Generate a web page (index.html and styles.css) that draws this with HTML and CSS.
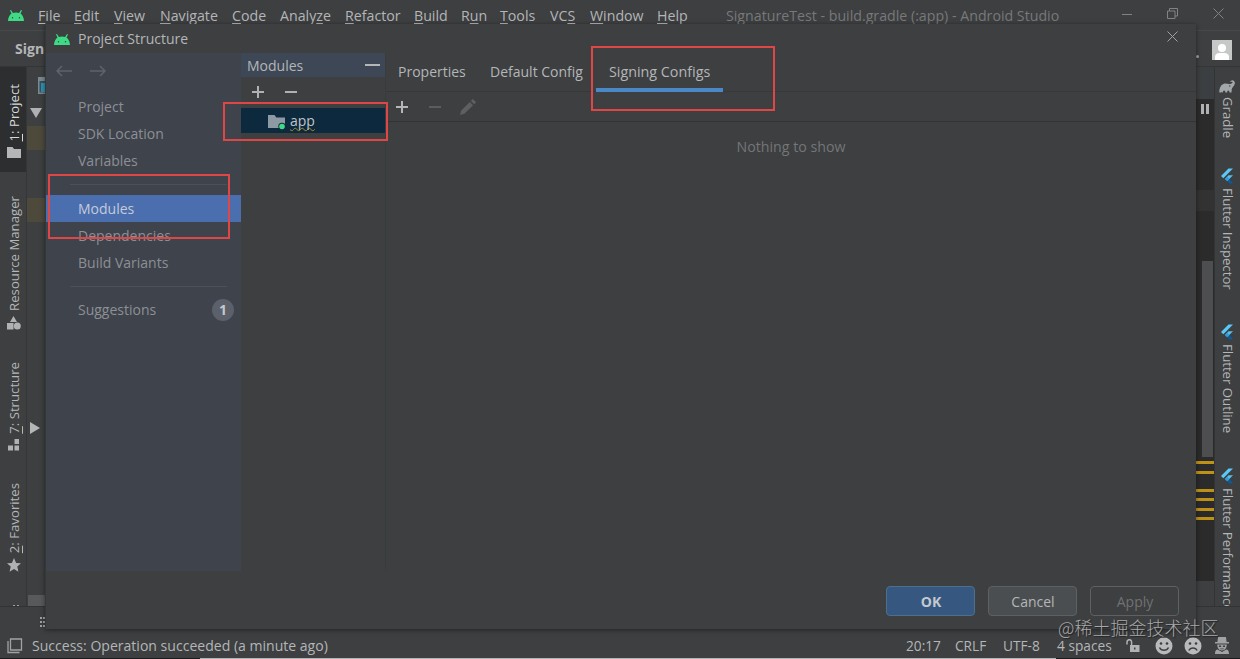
FILE: index.html
```html
<!DOCTYPE html>
<html lang="en">

<head>
  <meta charset="UTF-8" />
  <meta name="viewport" content="width=device-width, initial-scale=1.0" />
  <title>SignatureTest - Android Studio</title>
  <link rel="stylesheet" href="styles.css">
</head>

<body>

  <!-- shared icons -->
  <svg class="sprite" width="0" height="0">
    <symbol id="android" viewBox="0 0 16 11">
      <path fill="#3ddc84" d="M0 11C.2 7.500 1.500 5 3.500 3.600L2 .6 3 0l1.900 3a8.300 8.300 0 0 1 6.200 0L13 0l1 .6-1.500 3c2 1.400 3.300 3.900 3.500 7.400z" />
      <circle cx="4.500" cy="7.700" r=".7" fill="#3c3f41" />
      <circle cx="11.500" cy="7.700" r=".7" fill="#3c3f41" />
    </symbol>
    <symbol id="flutter" viewBox="0 0 12 16">
      <path fill="#5cc8f8" d="M0 8 7.500.5H12L2.300 10.200z" />
      <path fill="#54c0f0" d="M4 11 7.500 7.300H12L6.300 13z" />
      <path fill="#0d5b9d" d="m6.200 13 2.200-2.100L12 15.500H8.500z" />
      <path fill="#2d9fdc" d="M4 11l2.300-2.200 2.200 2.200L6.200 13.200z" />
    </symbol>
    <symbol id="close" viewBox="0 0 11 11">
      <path d="M.5.5l10 10M10.500.5l-10 10" stroke="currentColor" fill="none" />
    </symbol>
  </svg>

  <div class="ide">
    <header class="menubar">
      <svg class="logo" width="16" height="11"><use href="#android" /></svg>
      <nav class="menu">
        <span><u>F</u>ile</span>
        <span><u>E</u>dit</span>
        <span><u>V</u>iew</span>
        <span><u>N</u>avigate</span>
        <span><u>C</u>ode</span>
        <span>Analy<u>z</u>e</span>
        <span><u>R</u>efactor</span>
        <span><u>B</u>uild</span>
        <span>R<u>u</u>n</span>
        <span><u>T</u>ools</span>
        <span>VC<u>S</u></span>
        <span><u>W</u>indow</span>
        <span><u>H</u>elp</span>
      </nav>
      <span class="window-title">SignatureTest - build.gradle (:app) - Android Studio</span>
      <div class="window-buttons">
        <svg width="10" height="11"><path d="M0 6.500h10" stroke="#818384" /></svg>
        <svg width="11" height="11" fill="none" stroke="#818384"><path d="M.5 3h7.500v7.500H.5zM2.500 3V.5h8v7.500H8" /></svg>
        <svg width="11" height="11"><use href="#close" /></svg>
      </div>
    </header>

    <div class="toolbar">
      <b>Sign</b>
      <i class="more"></i>
      <svg class="avatar" width="20" height="20">
        <path fill="#c6c8c8" d="M0 0h20v20H0z" />
        <circle cx="10" cy="8" r="4" fill="#fff" />
        <path fill="#fff" d="M3 20v-3c0-2.500 2-4 4.500-4h5c2.500 0 4.500 1.500 4.500 4v3z" />
      </svg>
    </div>

    <main class="workspace">
      <aside class="rail rail-left">
        <div class="rail-tab project active">
          <span><u>1</u>: Project</span>
          <svg width="14" height="12"><path fill="#b4b6b7" d="M0 1h5.500L7 3h7v9H0z" /></svg>
        </div>
        <div class="rail-tab resource">
          <span>Resource Manager</span>
          <svg width="14" height="14" fill="#afb1b3"><path d="M6.500 0 10 6H3zM0 7h6.500v6.500H0z" /><circle cx="10.300" cy="10" r="3.500" /></svg>
        </div>
        <div class="rail-tab structure">
          <span><u>7</u>: Structure</span>
          <svg width="12" height="12" fill="#afb1b3"><path d="M7.500 0H12v5H7.500zM1 6.500h5v5H1zM7.500 6.500H12v5H7.500z" /></svg>
        </div>
        <div class="rail-tab favorites">
          <span><u>2</u>: Favorites</span>
          <svg width="14" height="14"><path fill="#afb1b3" d="m7 0 2.100 4.900 4.900.4-3.700 3.300 1.100 5.100L7 11l-4.400 2.700 1.100-5.100L0 5.300l4.900-.4z" /></svg>
        </div>
        <div class="rail-cut"></div>
      </aside>

      <section class="tree-edge">
        <svg class="view-icon" width="8" height="17"><path fill="#7d888e" d="M0 0h8v17H0z" /><path fill="#35505c" d="M1.500 4H8v11.500H1.500z" /><path fill="#2e91b0" d="M3 6h5v9H3z" /></svg>
        <svg class="expanded" width="12" height="10"><path fill="#afb1b3" d="M0 0h12L6 10z" /></svg>
        <div class="row-mark"></div>
        <div class="row-mark second"></div>
        <svg class="collapsed" width="10" height="12"><path fill="#b4b6b7" d="M0 0l10 6-10 6z" /></svg>
        <div class="h-scroll"></div>
      </section>

      <section class="editor-edge">
        <svg width="8" height="10"><path fill="#afb1b3" d="M0 0h3v10H0zM5 0h3v10H5z" /></svg>
        <div class="caret-row"></div>
        <div class="v-scroll"></div>
        <div class="warnings">
          <i></i><i></i><i class="spaced"></i><i></i><i></i><i></i>
        </div>
      </section>

      <aside class="rail rail-right">
        <div class="rail-tab gradle">
          <svg width="16" height="13" viewBox="0 0 16 13"><path fill="#a4a7a9" d="M.3 12.500C.2 8 2 4.500 5 3.700c2-.6 4 .5 6 .2 2.200-.3 3-1.300 2.300-1.900-.5-.5-1.300.4-1.800-.1C11 1.300 12.500 0 14 .4c2 .5 2.400 3 1.200 4.800-.9 1.400-2.200 2.200-2.500 4.300l-.2 3h-2c0-1.300-.5-2-1.200-2s-1.200.7-1.200 2H6.400c0-1.300-.6-2-1.300-2s-1.300.7-1.300 2H2.500l-.2-1-.5 1z" /><circle cx="10.800" cy="6" r=".7" fill="#3c3f41" /></svg>
          <span>Gradle</span>
        </div>
        <div class="rail-tab inspector">
          <svg width="12" height="16"><use href="#flutter" /></svg>
          <span>Flutter Inspector</span>
        </div>
        <div class="rail-tab outline">
          <svg width="12" height="16"><use href="#flutter" /></svg>
          <span>Flutter Outline</span>
        </div>
        <div class="rail-tab performance">
          <svg width="12" height="16"><use href="#flutter" /></svg>
          <span>Flutter Performance</span>
        </div>
      </aside>
    </main>

    <div class="bottom-strip">
      <svg width="5" height="11" fill="#a0a2a3"><path d="M0 0h2v2H0zM3 0h2v2H3zM0 4h2v2H0zM3 4h2v2H3zM0 8h2v2H0zM3 8h2v2H3z" /></svg>
    </div>

    <footer class="statusbar">
      <svg width="16" height="16" fill="none" stroke="#a0a2a3" stroke-width="1.300"><path d="M3.500 1h11v11h-11zM1 3v11.500h11.500" /></svg>
      <span class="message">Success: Operation succeeded (a minute ago)</span>
      <span class="cell time">20:17</span>
      <span class="cell crlf">CRLF</span>
      <span class="cell encoding">UTF-8</span>
      <span class="cell indent">4 spaces</span>
      <div class="status-icons">
        <svg width="14" height="13"><path fill="#b0b2b3" d="M4 6h9.500v7H4z" /><path fill="none" stroke="#b0b2b3" stroke-width="1.500" d="M1 5.500V3a2.200 2.200 0 0 1 4.600 0v3" /><path fill="#3c3f41" d="M8 8.500h1.500v2H8z" /></svg>
        <svg width="18" height="18"><circle cx="9" cy="9" r="8.500" fill="#b8babb" /><circle cx="6" cy="6.500" r="1.300" fill="#3c3f41" /><circle cx="12" cy="6.500" r="1.300" fill="#3c3f41" /><path fill="none" stroke="#3c3f41" stroke-width="1.400" d="M4.500 10.500c1.800 3.700 7.200 3.700 9 0" /></svg>
        <svg width="18" height="18"><circle cx="9" cy="9" r="8.500" fill="#b8babb" /><circle cx="6" cy="6.500" r="1.300" fill="#3c3f41" /><circle cx="12" cy="6.500" r="1.300" fill="#3c3f41" /><path fill="none" stroke="#3c3f41" stroke-width="1.400" d="M4.800 13.500c1.800-3.400 6.600-3.400 8.400 0" /></svg>
        <svg width="14" height="17" viewBox="0 0 16 17" preserveAspectRatio="none" fill="#a0a2a3"><path d="M3.500 0h9l.8 5H16v1.500H0V5h2.700zM2.500 7.500h11c0 3-2 6-5.500 6s-5.500-3-5.500-6zM0 17c0-3 1-4.300 3-4.500L8 15l5-2.500c2 .2 3 1.500 3 4.500z" /><path fill="#3c3f41" d="M4.500 8.500H7V10H4.500zM9 8.500h2.500V10H9zM6 11.500h4v.8H6z" /></svg>
      </div>
    </footer>
    <div class="desktop-line"></div>
  </div>

  <!-- Project Structure window -->
  <div class="dialog">
    <div class="dialog-title">
      <svg width="16" height="11"><use href="#android" /></svg>
      <span>Project Structure</span>
      <svg class="dialog-close" width="11" height="11"><use href="#close" /></svg>
    </div>

    <div class="dialog-body">
      <nav class="sidebar">
        <div class="history">
          <svg width="16" height="12"><path d="M16 6H1M6 1 1 6l5 5" /></svg>
          <svg width="16" height="12"><path d="M0 6h15M10 1l5 5-5 5" /></svg>
        </div>
        <a>Project</a>
        <a>SDK Location</a>
        <a>Variables</a>
        <hr>
        <a class="selected">Modules</a>
        <a>Dependencies</a>
        <a>Build Variants</a>
        <hr>
        <a class="suggestions">Suggestions <span class="count">1</span></a>
      </nav>

      <section class="modules">
        <div class="modules-head"><span>Modules</span><i></i></div>
        <div class="modules-tools">
          <svg width="12" height="12"><path d="M6 0v12M0 6h12" stroke="#afb1b3" stroke-width="2" /></svg>
          <svg width="12" height="12"><path d="M0 6h12" stroke="#afb1b3" stroke-width="2" /></svg>
        </div>
        <div class="module-row">
          <svg width="18" height="15"><path fill="#8d9aa3" d="M0 0h6.500l1.800 2.500H17V13H0z" /><circle cx="14" cy="11.500" r="3.700" fill="#0d293e" /><circle cx="14" cy="11.500" r="2.800" fill="#3ddc84" /></svg>
          <span>app</span>
        </div>
      </section>

      <section class="content">
        <div class="tabs">
          <span class="properties">Properties</span>
          <span class="default-config">Default Config</span>
          <span class="signing current">Signing Configs</span>
        </div>
        <div class="content-tools">
          <svg width="12" height="12"><path d="M6 0v12M0 6h12" stroke="#b4b6b7" stroke-width="2" /></svg>
          <svg width="12" height="12"><path d="M0 6h12" stroke="#5a5d5f" stroke-width="2" /></svg>
          <svg width="17" height="16" fill="#5d5f60"><path d="m0 16 1.200-4.500L9.800 3l3.300 3.300-8.600 8.500zM10.800 2l2-2 3.400 3.300-2 2z" /></svg>
        </div>
        <p class="empty">Nothing to show</p>
      </section>
    </div>

    <div class="dialog-buttons">
      <button class="ok">OK</button>
      <button class="cancel">Cancel</button>
      <button class="apply" disabled>Apply</button>
    </div>
  </div>

  <!-- callouts -->
  <div class="callout callout-modules"></div>
  <div class="callout callout-app"></div>
  <div class="callout callout-signing"></div>
  <div class="watermark">@稀土掘金技术社区</div>

</body>

</html>
```

FILE: styles.css
```css
* {
  box-sizing: border-box;
}

body {
  margin: 0;
  width: 1240px;
  height: 659px;
  overflow: hidden;
  position: relative;
  background: #3d3f41;
  color: #b4b6b7;
  font-family: "Open Sans", "Noto Sans CJK SC", sans-serif;
  font-size: 14px;
  line-height: 20px;
  white-space: nowrap;
}

.sprite {
  position: absolute;
}

svg {
  display: block;
  flex-shrink: 0;
}

u {
  text-underline-offset: 2px;
  text-decoration-thickness: 1px;
}

.ide {
  display: grid;
  grid-template-rows: 30px 37px 539px 28px 24px 1px;
  height: 659px;
}

/* menu bar */
.menubar {
  display: flex;
  align-items: flex-start;
  padding: 6px 16px 0 8px;
}

.logo {
  margin: 4px 14px 0 0;
}

.menu {
  display: grid;
  grid-template-columns: 36px 40px 46px 72px 48px 65px 69px 47px 39px 50px 40px 67px 69px;
  font-size: 14.2px;
}

.window-title {
  color: #77797a;
  font-size: 14.2px;
}

.window-buttons {
  display: flex;
  gap: 35px;
  margin: 2px 0 0 auto;
  color: #818384;
}

.toolbar {
  display: flex;
  justify-content: space-between;
  padding: 8px 8px 0 15px;
  border-top: 1px solid #47494b;
  border-bottom: 1px solid #333536;
}

.more {
  width: 3px;
  height: 3px;
  margin: 16px 13px 0 auto;
  border-radius: 50%;
  background: #a0a2a3;
}

.avatar {
  margin-top: 1px;
}

/* workspace */
.workspace {
  display: flex;
  overflow: hidden;
}

.rail {
  display: flex;
  flex-direction: column;
  font-size: 13.2px;
}

.rail-left {
  width: 27px;
  border-right: 1px solid #343637;
}

.rail-right {
  width: 26px;
  border-left: 1px solid #323435;
  overflow: hidden;
}

.rail-tab {
  display: flex;
  flex-direction: column;
  flex-shrink: 0;
}

.rail-tab span {
  writing-mode: vertical-rl;
  line-height: 20px;
}

.rail-tab u {
  text-underline-offset: 1px;
}

.rail-left .rail-tab {
  justify-content: flex-end;
  gap: 5px;
  padding: 0 0 0 7px;
}

.rail-left .rail-tab span {
  transform: rotate(180deg);
  width: 20px;
  margin-left: -3px;
}

.project {
  height: 105px;
}

.rail-left .project {
  padding-bottom: 14px;
}

.project.active {
  background: #2c2e2f;
  color: #d8d9da;
}

.resource {
  height: 158px;
}

.structure {
  height: 121px;
}

.favorites {
  height: 121px;
}

.rail-cut {
  width: 6px;
  height: 2px;
  margin: 33px 0 0 13px;
  border-left: 2px solid #9b9d9e;
  border-right: 2px solid #9b9d9e;
}

.rail-right .rail-tab {
  gap: 4px;
  margin-left: 6px;
}

.rail-right .rail-tab span {
  width: 20px;
  margin-left: -3px;
}

.rail-right .gradle {
  height: 87px;
  padding-top: 13px;
  margin-left: 4px;
}

.rail-right .gradle span {
  margin-left: -1px;
}

.rail-right .inspector {
  height: 156px;
  padding-top: 14px;
}

.rail-right .outline {
  height: 144px;
  padding-top: 14px;
}

.rail-right .performance {
  height: 152px;
  padding-top: 14px;
  overflow: hidden;
}

.tree-edge {
  width: 19px;
  padding-top: 10px;
}

.view-icon {
  margin-left: 11px;
}

.expanded {
  margin: 14px 0 8px 3px;
}

.row-mark {
  height: 24px;
  background: #4d4a3c;
}

.row-mark.second {
  margin-top: 48px;
}

.collapsed {
  margin: 200px 0 0 3px;
}

.h-scroll {
  height: 11px;
  margin: 161px 1px 0;
  background: #58595a;
}

.editor-edge {
  width: 18px;
  height: 514px;
  margin-left: auto;
  background: #2b2b2b;
}

.editor-edge > svg {
  box-sizing: content-box;
  padding: 37px 5px 11px;
  width: 8px;
  background: linear-gradient(#3c3f41 32px, #2b2b2b 32px);
}

.caret-row {
  height: 21px;
  margin-top: 65px;
  background: #323232;
}

.v-scroll {
  width: 11px;
  height: 196px;
  margin: 50px 0 4px 6px;
  background: #4d4e4f;
}

.warnings {
  display: flex;
  flex-direction: column;
  gap: 6px;
}

.warnings i {
  height: 3px;
  background: #be9117;
}

.warnings i + i {
  margin-top: 0.5px;
}

.warnings .spaced {
  margin-top: 9px !important;
}

.bottom-strip {
  padding: 10px 0 0 40px;
  border-top: 1px solid #313334;
}

/* status bar */
.statusbar {
  display: flex;
  align-items: center;
  padding: 0 11px 1px 7px;
}

.message {
  margin-left: 9px;
  font-size: 14.05px;
}

.cell {
  font-size: 13.7px;
}

.time {
  width: 49px;
  margin-left: auto;
}

.crlf {
  width: 48px;
}

.encoding {
  width: 54px;
}

.indent {
  width: 69px;
}

.status-icons {
  display: flex;
  align-items: center;
  gap: 11px;
}

.status-icons svg:first-child {
  margin-right: 4px;
}

.status-icons svg:last-child {
  margin-left: 2px;
}

.desktop-line {
  background: linear-gradient(to right, #17191b 200px, #b1b3b4 200px, #b1b3b4 1056px, #17191b 1056px);
}

/* dialog window */
.dialog {
  position: absolute;
  left: 45px;
  top: 24px;
  width: 1151px;
  height: 605px;
  display: flex;
  flex-direction: column;
  background: #3d3f41;
  border-left: 1px solid #35383a;
  box-shadow: 0 1px 5px rgba(0, 0, 0, 0.45);
}

.dialog-title {
  display: flex;
  align-items: center;
  gap: 8px;
  height: 29px;
  padding: 1px 18px 0 8px;
}

.dialog-close {
  margin: -5px 0 0 auto;
  color: #a0a2a3;
}

.dialog-body {
  display: flex;
  height: 518px;
}

.sidebar {
  width: 195px;
  background: #3f434c;
  color: #8c9095;
}

.history {
  display: flex;
  gap: 18px;
  height: 40px;
  padding: 12px 0 0 10px;
}

.history path {
  fill: none;
  stroke: #5f646a;
  stroke-width: 1.500;
}

.sidebar a {
  display: block;
  height: 27px;
  padding-left: 32px;
  line-height: 28px;
}

.sidebar hr {
  height: 1px;
  margin: 10px 14px 10px 24px;
  border: 0;
  background: #4c5158;
}

.sidebar .selected {
  background: #4b6eaf;
  color: #c3cbd9;
}

.sidebar .suggestions {
  display: flex;
  align-items: center;
  justify-content: space-between;
  padding: 0 7px 2px 32px;
}

.count {
  width: 22px;
  height: 22px;
  border-radius: 50%;
  background: #5b606b;
  color: #c5c8cd;
  font-weight: bold;
  line-height: 22px;
  text-align: center;
}

.modules {
  width: 145px;
  border-right: 1px solid #393c3e;
}

.modules-head {
  display: flex;
  align-items: center;
  justify-content: space-between;
  height: 24px;
  padding: 1px 5px 0 6px;
  background: #3d4755;
}

.modules-head i {
  width: 15px;
  height: 2px;
  margin-top: -1px;
  background: #b4b6b7;
}

.modules-tools {
  display: flex;
  align-items: center;
  gap: 21px;
  height: 31px;
  padding: 0 0 1px 11px;
}

.module-row {
  display: flex;
  align-items: center;
  gap: 4px;
  height: 25px;
  padding-left: 27px;
  background: #0d293e;
  color: #c0c4c7;
}

.module-row svg {
  margin-top: 3px;
}

.module-row span {
  text-decoration: underline wavy #a98b32 1px;
  text-decoration-skip-ink: none;
  text-underline-offset: 1px;
}

.content {
  flex: 1;
}

.tabs {
  display: flex;
  height: 39px;
  padding-left: 12px;
  border-bottom: 1px solid #36393b;
}

.tabs span {
  height: 39px;
  line-height: 38px;
}

.properties {
  width: 92px;
}

.default-config {
  width: 106px;
}

.signing {
  width: 127px;
  padding-left: 13px;
  font-size: 14.3px;
}

.tabs .current {
  border-bottom: 4px solid #4a88c7;
}

.content-tools {
  display: flex;
  align-items: center;
  gap: 21px;
  height: 30px;
  padding-left: 10px;
  border-bottom: 1px solid #313335;
}

.content-tools svg:last-child {
  margin-left: -2px;
}

.empty {
  margin: 15px 0 0;
  color: #747677;
  font-size: 14.2px;
  text-align: center;
}

.dialog-buttons {
  display: flex;
  justify-content: flex-end;
  gap: 13px;
  padding: 15px 17px 0;
}

.dialog-buttons button {
  width: 89px;
  height: 30px;
  padding: 1px 0 0 1px;
  border: 1px solid #5e6162;
  border-radius: 4px;
  background: #4a4e50;
  color: #b4b6b7;
  font: inherit;
}

.dialog-buttons .ok {
  border-color: #4c708c;
  background: #365880;
  color: #c4c9cf;
  font-weight: bold;
}

.dialog-buttons .apply {
  background: #3d3f41;
  color: #707273;
}

/* callouts lie over both windows */
.callout {
  position: absolute;
  border: 2px solid #df4646;
}

.callout-modules {
  left: 48px;
  top: 174px;
  width: 182px;
  height: 65px;
}

.callout-app {
  left: 223px;
  top: 102px;
  width: 165px;
  height: 39px;
}

.callout-signing {
  left: 591px;
  top: 46px;
  width: 184px;
  height: 65px;
}

.watermark {
  position: absolute;
  left: 1058px;
  top: 615px;
  color: #a6a8a9;
  font-family: "Noto Sans CJK SC", sans-serif;
  font-size: 18px;
  line-height: 24px;
  font-weight: 300;
  text-shadow: 1px 1px 1px #222;
}
```
